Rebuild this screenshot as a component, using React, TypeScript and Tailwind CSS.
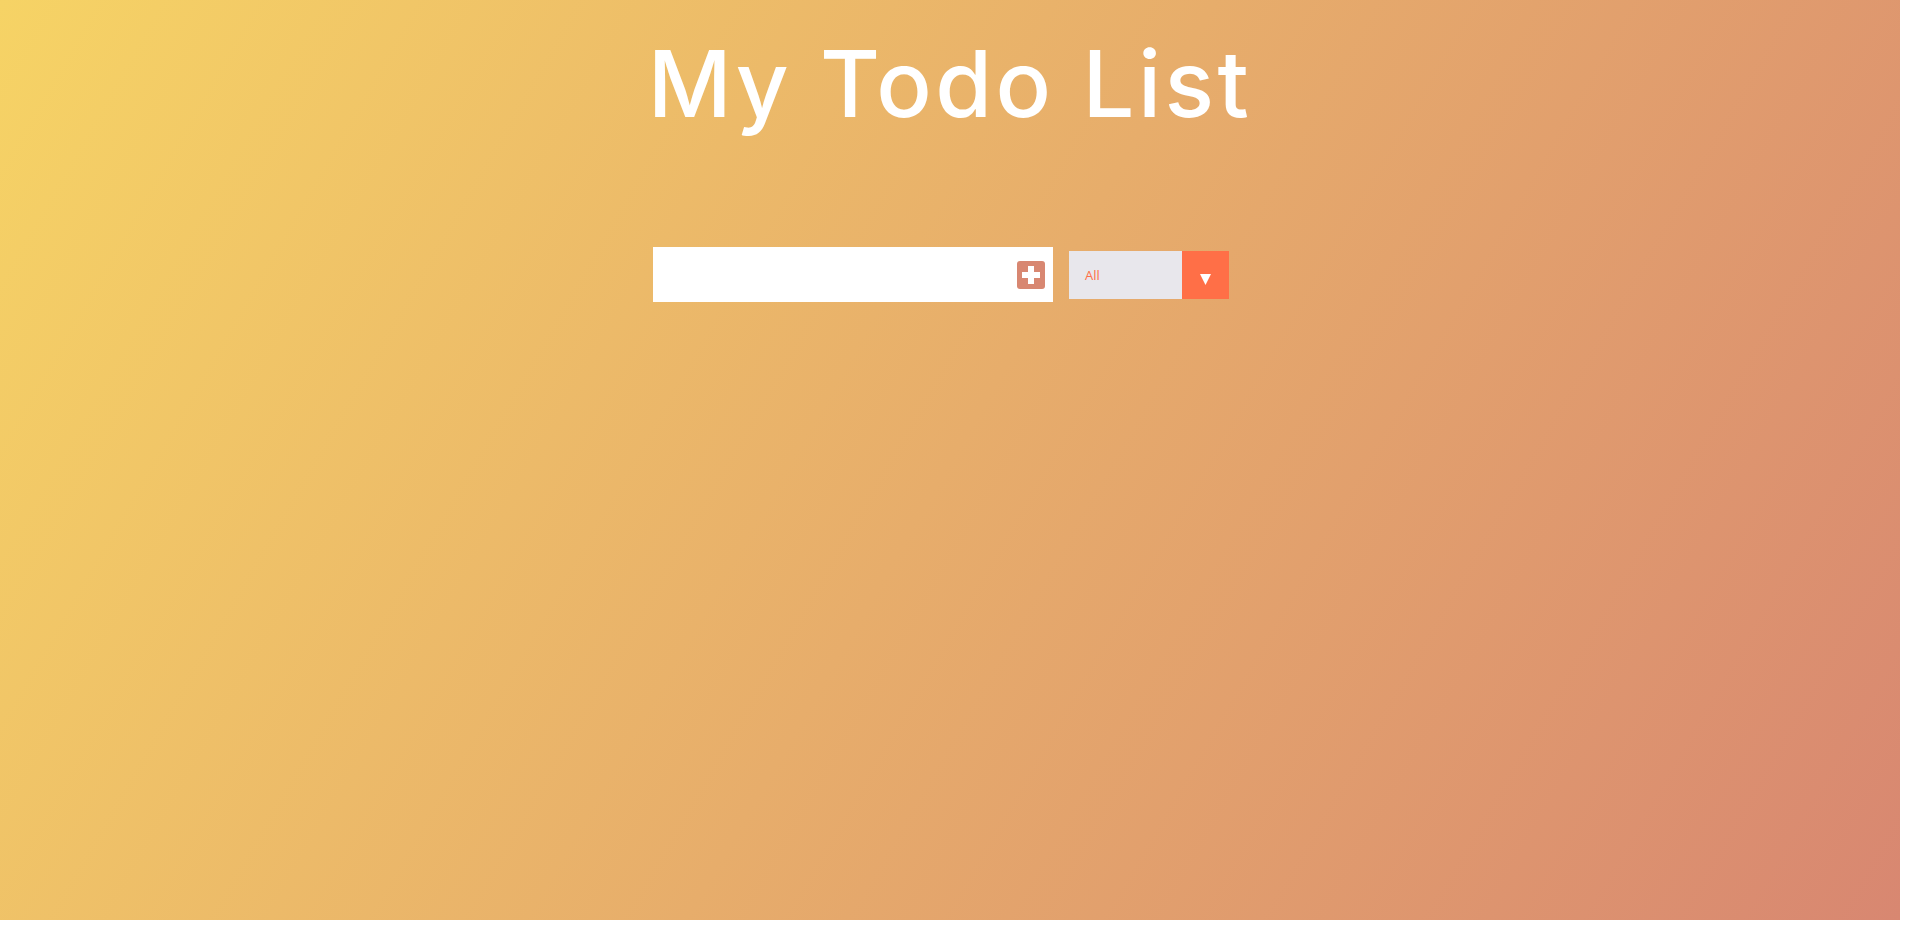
const App = () => {
  return (
    <div className="min-h-screen bg-white">
      <div className="w-[1900px] h-[920px] bg-[linear-gradient(120deg,#f6d365,#d88771)] text-white font-['Inter',sans-serif]">
        <header className="pt-[28px] h-[247px]">
          <h1 className="text-center text-[92px] leading-[112px] font-medium tracking-[3.4px]">My Todo List</h1>
        </header>

        <form className="flex justify-center items-center pr-[2px]">
          <div className="w-[400px] h-[55px] bg-white flex items-center justify-end pr-[8px]">
            <input type="text" className="flex-1 h-full min-w-0 outline-none" />
            <button type="button" className="w-[28px] h-[28px] rounded-[3px] bg-[#d88771]">
              <svg viewBox="0 0 28 28" className="w-[28px] h-[28px]" fill="white">
                <path d="M11 5h6v6h6v6h-6v6h-6v-6H5v-6h6z" />
              </svg>
            </button>
          </div>

          <div className="mx-[16px] w-[160px] h-[48px] flex bg-[#e8e7ec]">
            <span className="flex-1 pl-[16px] pt-[2px] flex items-center text-[13px] text-[#ff6f47] font-['Open_Sans',sans-serif]">All</span>
            <span className="w-[47px] bg-[#ff6f47] flex items-center justify-center pt-[9px]">
              <svg viewBox="0 0 11 11" className="w-[11px] h-[11px]" fill="white">
                <polygon points="0,0 11,0 5.5,11" />
              </svg>
            </span>
          </div>
        </form>
      </div>
    </div>
  );
};

export default App;
